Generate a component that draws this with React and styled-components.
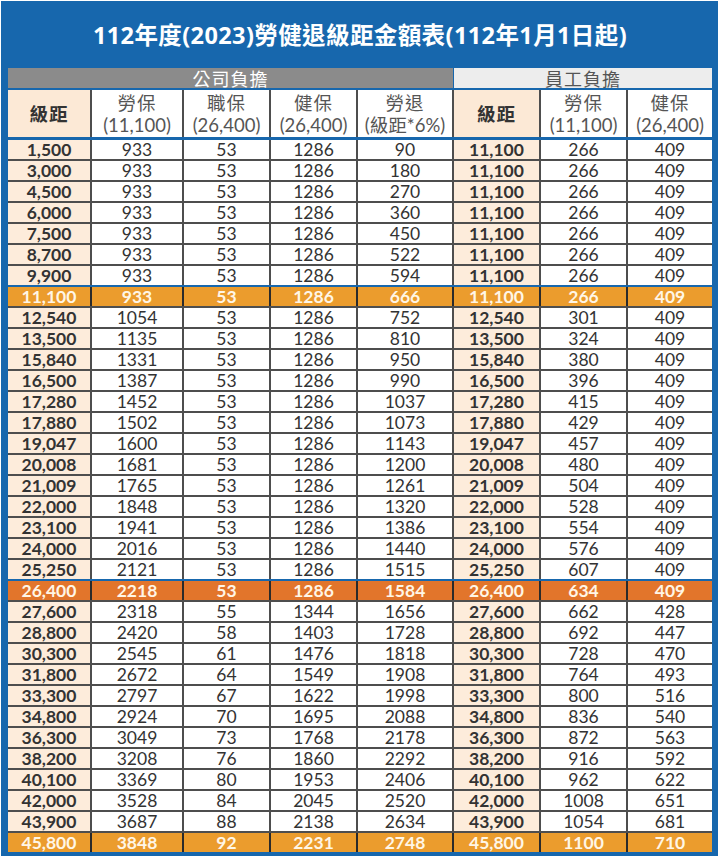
import React from "react";
import styled, { createGlobalStyle } from "styled-components";

const Global = createGlobalStyle`
  html, body { margin: 0; padding: 0; background: #ffffff; }
  body { font-family: "Lato", "Noto Sans CJK TC", sans-serif; }
`;

const COLS = "82px 90px 85px 85px 94px 85px 85px 84px";
const BLUE = "#1767ad";
const LINE = "#4e4e4e";

const Frame = styled.div`
  width: 717px;
  margin: 1px 0 0 1px;
  background: ${BLUE};
  padding: 0 6px 4px 7px;
  box-sizing: border-box;
`;

const Title = styled.h1`
  margin: 0;
  height: 67px;
  padding-bottom: 2px;
  box-sizing: border-box;
  display: flex;
  align-items: center;
  justify-content: center;
  color: #ffffff;
  font-family: "Open Sans", "Noto Sans CJK TC", sans-serif;
  font-weight: 700;
  font-size: 23.5px;
  letter-spacing: 0.4px;
`;

const Band = styled.div`
  display: grid;
  grid-template-columns: 1fr 258px;
  column-gap: 1px;
  height: 20px;
`;

const BandCell = styled.div`
  background: ${(p) => (p.$light ? "#ededed" : "#8b8b8b")};
  color: ${(p) => (p.$light ? "#555555" : "#ffffff")};
  font-family: "Noto Sans CJK TC", sans-serif;
  font-size: 18px;
  line-height: 20px;
  text-align: center;
  letter-spacing: 1px;
`;

const Head = styled.div`
  display: grid;
  grid-template-columns: ${COLS};
  column-gap: 2px;
  background: ${LINE};
  border-top: 2px solid ${BLUE};
  border-bottom: 3px solid ${BLUE};
`;

const HeadCell = styled.div`
  height: 47px;
  background: ${(p) => (p.$peach ? "#fce9d6" : "#ffffff")};
  display: flex;
  flex-direction: column;
  align-items: center;
  justify-content: center;
  color: ${(p) => (p.$peach ? "#333333" : "#555555")};
  line-height: 23px;
  white-space: nowrap;
`;

const HeadTop = styled.span`
  font-family: "Noto Sans CJK TC", sans-serif;
  font-size: 18.5px;
  letter-spacing: 1px;
`;

const HeadSub = styled.span`
  font-family: "Lato", "Noto Sans CJK TC", sans-serif;
  font-size: 18.5px;
`;

const PeachLabel = styled.span`
  font-family: "Noto Sans CJK TC", sans-serif;
  font-size: 18.5px;
  font-weight: 700;
  letter-spacing: 1px;
`;

const Body = styled.div`
  display: flex;
  flex-direction: column;
  background: ${LINE};
`;

const Row = styled.div`
  display: grid;
  grid-template-columns: ${COLS};
  column-gap: 2px;
  background: ${(p) => (p.$hl ? "#2a2a2a" : LINE)};
  border-top: ${(p) => (p.$first ? "0" : `2px solid ${p.$blue ? BLUE : LINE}`)};
`;

const Cell = styled.div`
  height: 19px;
  display: flex;
  align-items: center;
  justify-content: center;
  font-size: 17.5px;
  line-height: 1;
  font-family: "Lato", sans-serif;
  color: ${(p) => (p.$hl ? "#fff6e6" : "#333333")};
  font-weight: ${(p) => (p.$bold || p.$hl ? 700 : 400)};
  background: ${(p) =>
    p.$hl === "dark"
      ? "#e2752b"
      : p.$hl
      ? "#eb9c2d"
      : p.$peach
      ? "#fdecdb"
      : "#ffffff"};
`;

const rows = [
  ["1,500", "933", "53", "1286", "90", "11,100", "266", "409"],
  ["3,000", "933", "53", "1286", "180", "11,100", "266", "409"],
  ["4,500", "933", "53", "1286", "270", "11,100", "266", "409"],
  ["6,000", "933", "53", "1286", "360", "11,100", "266", "409"],
  ["7,500", "933", "53", "1286", "450", "11,100", "266", "409"],
  ["8,700", "933", "53", "1286", "522", "11,100", "266", "409"],
  ["9,900", "933", "53", "1286", "594", "11,100", "266", "409"],
  ["11,100", "933", "53", "1286", "666", "11,100", "266", "409"],
  ["12,540", "1054", "53", "1286", "752", "12,540", "301", "409"],
  ["13,500", "1135", "53", "1286", "810", "13,500", "324", "409"],
  ["15,840", "1331", "53", "1286", "950", "15,840", "380", "409"],
  ["16,500", "1387", "53", "1286", "990", "16,500", "396", "409"],
  ["17,280", "1452", "53", "1286", "1037", "17,280", "415", "409"],
  ["17,880", "1502", "53", "1286", "1073", "17,880", "429", "409"],
  ["19,047", "1600", "53", "1286", "1143", "19,047", "457", "409"],
  ["20,008", "1681", "53", "1286", "1200", "20,008", "480", "409"],
  ["21,009", "1765", "53", "1286", "1261", "21,009", "504", "409"],
  ["22,000", "1848", "53", "1286", "1320", "22,000", "528", "409"],
  ["23,100", "1941", "53", "1286", "1386", "23,100", "554", "409"],
  ["24,000", "2016", "53", "1286", "1440", "24,000", "576", "409"],
  ["25,250", "2121", "53", "1286", "1515", "25,250", "607", "409"],
  ["26,400", "2218", "53", "1286", "1584", "26,400", "634", "409"],
  ["27,600", "2318", "55", "1344", "1656", "27,600", "662", "428"],
  ["28,800", "2420", "58", "1403", "1728", "28,800", "692", "447"],
  ["30,300", "2545", "61", "1476", "1818", "30,300", "728", "470"],
  ["31,800", "2672", "64", "1549", "1908", "31,800", "764", "493"],
  ["33,300", "2797", "67", "1622", "1998", "33,300", "800", "516"],
  ["34,800", "2924", "70", "1695", "2088", "34,800", "836", "540"],
  ["36,300", "3049", "73", "1768", "2178", "36,300", "872", "563"],
  ["38,200", "3208", "76", "1860", "2292", "38,200", "916", "592"],
  ["40,100", "3369", "80", "1953", "2406", "40,100", "962", "622"],
  ["42,000", "3528", "84", "2045", "2520", "42,000", "1008", "651"],
  ["43,900", "3687", "88", "2138", "2634", "43,900", "1054", "681"],
  ["45,800", "3848", "92", "2231", "2748", "45,800", "1100", "710"],
];

const highlightRows = { 7: "light", 21: "dark", 33: "light" };
const blueAbove = { 7: true, 21: true };

const heads = [
  { peach: true, label: "級距" },
  { top: "勞保", sub: "(11,100)" },
  { top: "職保", sub: "(26,400)" },
  { top: "健保", sub: "(26,400)" },
  { top: "勞退", sub: "(級距*6%)" },
  { peach: true, label: "級距" },
  { top: "勞保", sub: "(11,100)" },
  { top: "健保", sub: "(26,400)" },
];

export default function App() {
  return (
    <>
      <Global />
      <Frame>
        <Title>112年度(2023)勞健退級距金額表(112年1月1日起)</Title>
        <Band>
          <BandCell>公司負擔</BandCell>
          <BandCell $light>員工負擔</BandCell>
        </Band>
        <Head>
          {heads.map((h, i) =>
            h.peach ? (
              <HeadCell key={i} $peach>
                <PeachLabel>{h.label}</PeachLabel>
              </HeadCell>
            ) : (
              <HeadCell key={i}>
                <HeadTop>{h.top}</HeadTop>
                <HeadSub>{h.sub}</HeadSub>
              </HeadCell>
            )
          )}
        </Head>
        <Body>
          {rows.map((r, ri) => {
            const hl = highlightRows[ri];
            return (
              <Row key={ri} $first={ri === 0} $blue={blueAbove[ri]} $hl={!!hl}>
                {r.map((v, ci) => (
                  <Cell
                    key={ci}
                    $hl={hl}
                    $peach={ci === 0 || ci === 5}
                    $bold={ci === 0 || ci === 5}
                  >
                    {v}
                  </Cell>
                ))}
              </Row>
            );
          })}
        </Body>
      </Frame>
    </>
  );
}
